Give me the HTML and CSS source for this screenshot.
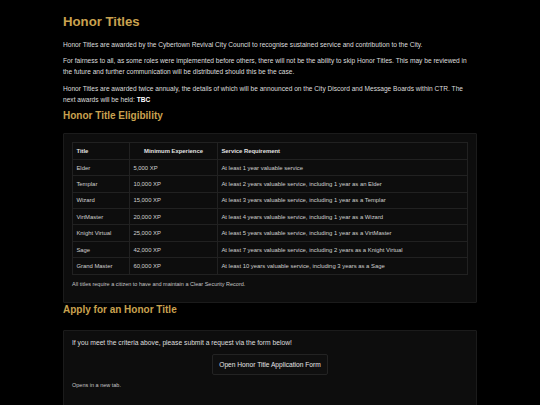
FILE: index.html
```html
<!DOCTYPE html>
<html lang="en">
<head>
<meta charset="utf-8">
<title>Honor Titles</title>
<link rel="stylesheet" href="styles.css">
</head>
<body>
<main class="page">
  <h1 class="title">Honor Titles</h1>
  <p class="text">Honor Titles are awarded by the Cybertown Revival City Council to recognise sustained service and contribution to the City.</p>
  <p class="text">For fairness to all, as some roles were implemented before others, there will not be the ability to skip Honor Titles. This may be reviewed in the future and further communication will be distributed should this be the case.</p>
  <p class="text">Honor Titles are awarded twice annualy, the details of which will be announced on the City Discord and Message Boards within CTR. The next awards will be held: <strong>TBC</strong></p>

  <h2 class="subtitle first">Honor Title Eligibility</h2>
  <section class="card card-table">
    <table class="titles">
      <colgroup>
        <col class="c1"><col class="c2"><col class="c3">
      </colgroup>
      <thead>
        <tr><th>Title</th><th class="center">Minimum Experience</th><th>Service Requirement</th></tr>
      </thead>
      <tbody>
        <tr><td>Elder</td><td>5,000 XP</td><td>At least 1 year valuable service</td></tr>
        <tr><td>Templar</td><td>10,000 XP</td><td>At least 2 years valuable service, including 1 year as an Elder</td></tr>
        <tr><td>Wizard</td><td>15,000 XP</td><td>At least 3 years valuable service, including 1 year as a Templar</td></tr>
        <tr><td>VirtMaster</td><td>20,000 XP</td><td>At least 4 years valuable service, including 1 year as a Wizard</td></tr>
        <tr><td>Knight Virtual</td><td>25,000 XP</td><td>At least 5 years valuable service, including 1 year as a VirtMaster</td></tr>
        <tr><td>Sage</td><td>42,000 XP</td><td>At least 7 years valuable service, including 2 years as a Knight Virtual</td></tr>
        <tr><td>Grand Master</td><td>60,000 XP</td><td>At least 10 years valuable service, including 3 years as a Sage</td></tr>
      </tbody>
    </table>
    <p class="note">All titles require a citizen to have and maintain a Clear Security Record.</p>
  </section>

  <h2 class="subtitle second">Apply for an Honor Title</h2>
  <section class="card card-apply">
    <p class="text text-apply">If you meet the criteria above, please submit a request via the form below!</p>
    <div class="actions">
      <a class="button" href="#">Open Honor Title Application Form</a>
    </div>
    <p class="note note-tab">Opens in a new tab.</p>
  </section>
</main>
</body>
</html>
```
FILE: styles.css
```css
html, body {
  margin: 0;
  padding: 0;
  background: #000;
}
body {
  font-family: "Liberation Sans", Arial, sans-serif;
  color: #dedede;
  height: 405px;
  overflow: hidden;
}
.page {
  width: 414px;
  margin: 0 auto;
  padding-top: 14px;
}
.title {
  margin: 0 0 9.4px;
  font-size: 13.2px;
  line-height: 15.2px;
  font-weight: bold;
  color: #c9a24f;
}
.text {
  margin: 0 0 5.6px;
  font-size: 6.6px;
  line-height: 11px;
}
.text strong {
  color: #fff;
}
.text-apply {
  font-size: 6.72px;
}
.subtitle {
  margin: 0;
  font-size: 10px;
  line-height: 11.5px;
  font-weight: bold;
  color: #c9a24f;
}
.subtitle.first {
  margin-top: 5.2px;
  margin-bottom: 11.6px;
}
.subtitle.second {
  margin-top: 1.3px;
  margin-bottom: 13.8px;
}
.card {
  background: #0d0d0d;
  border: 1px solid #1b1b1b;
  border-radius: 1px;
}
.card-table {
  padding: 8px 8px 8px;
}
.titles {
  width: 100%;
  border-collapse: collapse;
  font-size: 5.9px;
  color: #d0d0d0;
  table-layout: fixed;
}
.titles .c1 { width: 57px; }
.titles .c2 { width: 88px; }
.titles th,
.titles td {
  border: 1px solid #212121;
  height: 15.4px;
  padding: 0 3.4px;
  text-align: left;
  vertical-align: middle;
  white-space: nowrap;
}
.titles th {
  font-weight: bold;
  color: #e2e2e2;
}
.titles th.center {
  text-align: center;
}
.note {
  margin: 5.4px 0 6px 0;
  font-size: 5.5px;
  line-height: 8px;
  color: #c4c4c4;
}
.card-apply {
  padding: 6.5px 8px 40px;
}
.actions {
  display: flex;
  justify-content: center;
  margin-top: 4.5px;
}
.button {
  display: block;
  padding: 6px 6px;
  font-size: 6.65px;
  line-height: 7.7px;
  color: #e6e6e6;
  text-decoration: none;
  background: #0f0f0f;
  border: 1px solid #232323;
  border-radius: 2px;
}
.note-tab {
  margin-top: 5.3px;
}
```
